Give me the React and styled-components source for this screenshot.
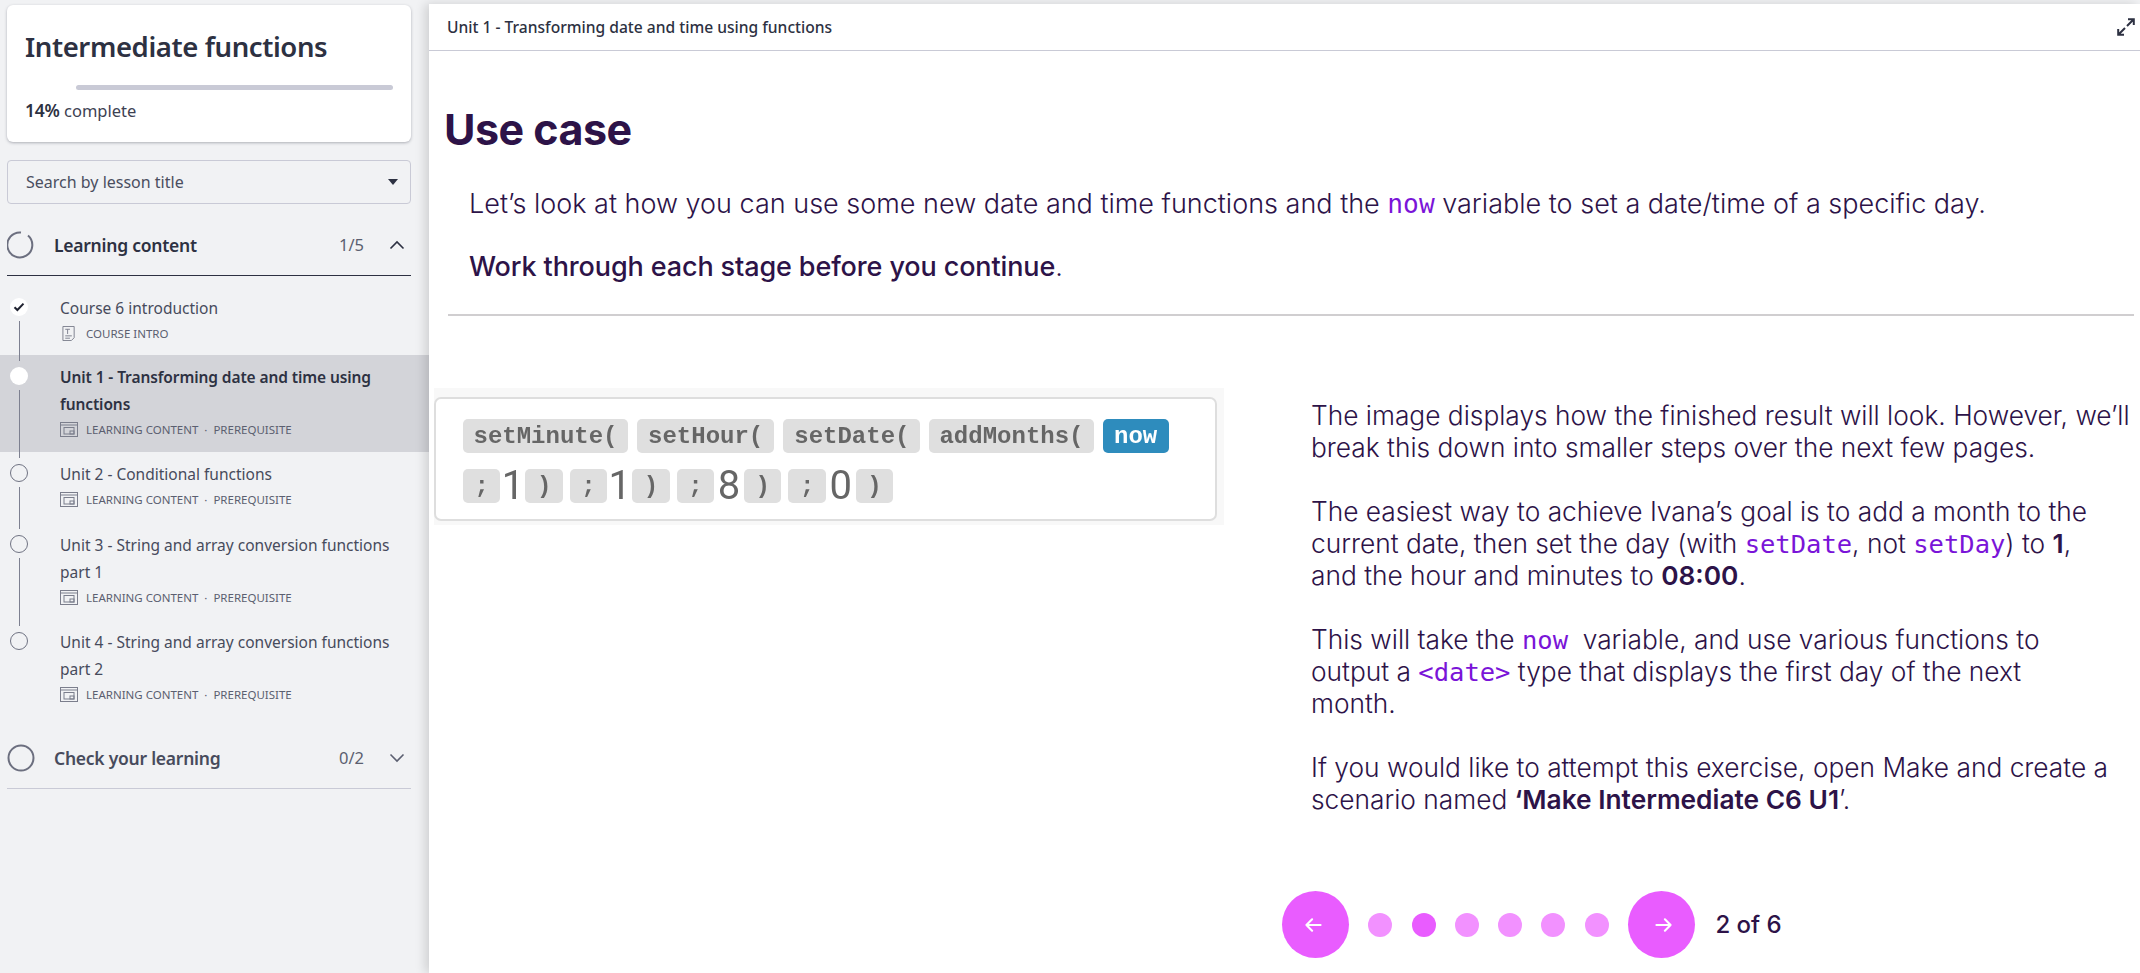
import React from 'react';
import styled, { createGlobalStyle } from 'styled-components';

const Global = createGlobalStyle`
  html, body { margin: 0; padding: 0; height: 100%; overflow: hidden; background: #fff; }
  #root { height: 973px; }
  * { box-sizing: border-box; }
`;
const SIDE = `"Noto Sans", "Open Sans", sans-serif`;
const BODY = `Inter, "Liberation Sans", sans-serif`;
const INK = '#2d3142';
const PURPLE = '#2d1348';

const Page = styled.div`
  display: flex; width: 2140px; height: 973px; overflow: hidden; background: #f1f2f4;
`;
const Sidebar = styled.aside`
  width: 429px; flex: none; padding-top: 5px; font-family: ${SIDE}; color: ${INK};
`;
const Card = styled.div`
  margin: 0 18px 0 7px; height: 137px; background: #fff; border-radius: 6px;
  box-shadow: 0 1px 3px rgba(45,49,66,.35); padding: 20px 18px 0;
`;
const Title = styled.h1`
  margin: 0; font-size: 27.5px; line-height: 43px; font-weight: 600; letter-spacing: -.4px; color: ${INK};
`;
const Track = styled.div`
  margin: 17px 0 0 51px; height: 5px; border-radius: 3px; background: #c9cad6;
`;
const Progress = styled.div`
  margin-top: 8px; font-size: 16.5px; line-height: 24px; color: #3d4152;
  b { font-weight: 600; font-size: 17.5px; letter-spacing: -.2px; color: ${INK}; }
`;
const Search = styled.div`
  margin: 18px 18px 0 7px; height: 44px; border: 1px solid #c9cad6; border-radius: 4px;
  display: flex; align-items: center; justify-content: space-between; padding: 0 12px 0 18px;
  font-size: 16px; color: #4a4e5f;
`;
const Caret = styled.span`
  width: 0; height: 0; border-left: 5px solid transparent; border-right: 5px solid transparent;
  border-top: 6px solid ${INK};
`;
const SectionHead = styled.div`
  margin: 0 18px 0 7px; height: ${p => p.$h}px; padding-top: ${p => p.$pt}px;
  display: flex; align-items: center; border-bottom: 1px solid ${p => p.$line};
`;
const SectionName = styled.span`
  margin-left: 19px; flex: 1; font-size: 17.5px; font-weight: 600; letter-spacing: -.25px; color: ${p => p.$c};
`;
const Count = styled.span`
  font-size: 16.5px; color: #5b5f70; margin-right: 25px;
`;
const Items = styled.ul`
  list-style: none; margin: 10px 0 0; padding: 0;
`;
const Item = styled.li`
  display: flex; height: ${p => p.$h}px; padding-top: 9px;
  background: ${p => (p.$active ? '#d3d4d9' : 'transparent')};
`;
const Rail = styled.div`
  width: 38px; margin-right: 22px; flex: none; display: flex; flex-direction: column; align-items: center;
`;
const Node = styled.div`
  width: 18px; height: 18px; flex: none; margin-top: 3px; border-radius: 50%;
  display: flex; align-items: center; justify-content: center;
  background: ${p => (p.$open ? 'transparent' : '#fff')};
  border: ${p => (p.$open ? '1px solid #6f7282' : 'none')};
`;
const Line = styled.div`
  width: 1px; flex: 1; margin: 5px 0 ${p => p.$mb}px; background: #7d8090;
`;
const ItemBody = styled.div`
  min-width: 0; flex: 1; padding-right: 30px;
`;
const ItemTitle = styled.div`
  font-size: 15.5px; line-height: 27px; font-weight: ${p => (p.$active ? 600 : 400)};
  letter-spacing: ${p => (p.$active ? '-.1px' : '0')};
  color: ${p => (p.$active ? INK : '#474b5c')};
`;
const Meta = styled.div`
  display: flex; align-items: center; height: 22px; font-size: 11.5px; color: #5b5f70; gap: 8px;
`;
const Main = styled.main`
  flex: 1; min-width: 0; margin-top: 4px; background: #fff; box-shadow: -4px 0 10px rgba(0,0,0,.14);
  position: relative; font-family: ${BODY}; color: ${PURPLE};
`;
const Header = styled.header`
  height: 47px; padding: 0 4px 0 18px; display: flex; align-items: center; justify-content: space-between;
  border-bottom: 1px solid #c9cad6; font-family: ${SIDE}; font-size: 15.6px; font-weight: 500; color: ${INK};
`;
const H2 = styled.h2`
  margin: 0; padding: 48px 0 0 15px; font-size: 43px; line-height: 60px; font-weight: 700; letter-spacing: -.5px;
`;
const Intro = styled.p`
  margin: 0; padding: ${p => p.$pt}px 0 0 40px; font-size: 27px; line-height: 32px; font-weight: ${p => p.$w || 300};
  letter-spacing: ${p => (p.$w ? '-.12px' : '0')}; white-space: nowrap;
`;
const Thin = styled.span`
  font-weight: 300;
`;
const Code = styled.code`
  font-family: "DejaVu Sans Mono", monospace; font-size: .97em; color: #7a14d8; font-weight: 400;
`;
const Divider = styled.hr`
  margin: 31px 6px 0 19px; border: 0; height: 2px; background: #d0ced0;
`;
const Columns = styled.div`
  display: grid; grid-template-columns: 882px 1fr; margin-top: 72px;
`;
const Shot = styled.div`
  margin-left: 5px; width: 790px; height: 137px; background: #f8f8f8; padding: 9px 8px 4px 0;
`;
const ShotCard = styled.div`
  width: 783px; height: 124px; background: #fff; border: 2px solid #dedede; border-radius: 7px;
  padding: 20px 0 0 27px; display: flex; flex-direction: column; gap: 16px; filter: blur(.45px);
`;
const ChipRow = styled.div`
  display: flex; align-items: center; gap: ${p => p.$gap}px;
`;
const Chip = styled.span`
  height: 34px; border-radius: 5px; background: ${p => (p.$blue ? '#2e8cbd' : '#dfdfdf')};
  color: ${p => (p.$blue ? '#fff' : '#666')}; padding: 0 ${p => p.$pad}px; display: flex; align-items: center;
  font-family: "Liberation Mono", monospace; font-size: 24px; font-weight: 700;
`;
const Group = styled.span`
  display: flex; align-items: center;
`;
const Num = styled.span`
  width: ${p => p.$w}px; text-align: center; font-family: Roboto, sans-serif; font-size: 40px; font-weight: 400;
  color: #666; line-height: 34px;
`;
const Right = styled.div`
  margin-top: 12px;
`;
const Para = styled.p`
  margin: 0 0 32px; font-size: 26.3px; line-height: 32px; font-weight: 300; white-space: nowrap;
  strong { font-weight: 600; }
`;
const Pager = styled.nav`
  position: absolute; left: 853px; top: 887px; display: flex; align-items: center; gap: 19.3px;
`;
const Round = styled.button`
  width: 67px; height: 67px; border: 0; border-radius: 50%; background: #e95cff; padding: 0;
  display: flex; align-items: center; justify-content: center;
`;
const Dot = styled.span`
  width: 24px; height: 24px; border-radius: 50%; background: ${p => (p.$on ? '#e95cff' : '#f291ff')};
`;
const PageNo = styled.span`
  margin-left: 1px; font-size: 24px; font-weight: 500; color: ${PURPLE};
`;

const Check = () => (
  <svg width="12" height="10" viewBox="0 0 12 10"><path d="M1.5 5.2 4.4 8 10.5 1.6" fill="none" stroke="#1f2230" strokeWidth="2" /></svg>
);
const MonitorIcon = () => (
  <svg width="18" height="15" viewBox="0 0 18 15" fill="none" stroke="#7b7e8c" strokeWidth="1"><rect x=".5" y=".5" width="17" height="14" /><path d="M.5 3h17" /><rect x="4" y="5.5" width="10" height="6.5" /><rect x="10" y="9" width="4" height="3" /></svg>
);
const DocIcon = () => (
  <svg width="18" height="15" viewBox="0 0 18 16" fill="none" stroke="#7b7e8c" strokeWidth="1"><path d="M2.5.5h12v12l-3 3h-9z" /><path d="M5 3.5h5M7.5 3.5v5M5 10.5h7M5 13h5" /></svg>
);
const Chevron = ({ up, c = INK }) => (
  <svg width="16" height="10" viewBox="0 0 16 10" fill="none" stroke={c} strokeWidth="1.6" style={{ marginRight: 6 }}><path d={up ? 'M1.5 8.5 8 2l6.5 6.5' : 'M1.5 1.5 8 8l6.5-6.5'} /></svg>
);
const Ring = ({ part }) => (
  <svg width="28" height="28" viewBox="0 0 28 28" fill="none" stroke="#6c6f7f" strokeWidth="2">
    {part ? <path d="M21 4.5A12.5 12.5 0 1 1 14 1.5" /> : <circle cx="14" cy="14" r="12.5" />}
  </svg>
);
const Arrow = ({ left }) => (
  <svg width="17" height="16" viewBox="0 0 18 16" fill="none" stroke="#fff" strokeWidth="2.2" strokeLinecap="round" strokeLinejoin="round" style={left ? { marginLeft: -4 } : { marginRight: -4 }}>
    {left ? <path d="M16.5 8H1.5M7.5 2 1.5 8l6 6" /> : <path d="M1.5 8h15M10.5 2l6 6-6 6" />}
  </svg>
);
const Expand = () => (
  <svg width="20" height="20" viewBox="0 0 20 20" fill="none" stroke="#2d3142" strokeWidth="2"><path d="M12 2.2h5.8V8M17.5 2.5 11 9M2.2 12v5.8H8M2.5 17.5 9 11" /></svg>
);

const META = 'LEARNING CONTENT \u00a0·\u00a0 PREREQUISITE';
const units = [
  { title: 'Unit 1 - Transforming date and time using functions', h: 97, active: true, mb: -6 },
  { title: 'Unit 2 - Conditional functions', h: 71, mb: -6, open: true },
  { title: 'Unit 3 - String and array conversion functions part 1', h: 97, mb: -6, open: true },
  { title: 'Unit 4 - String and array conversion functions part 2', h: 97, open: true, last: true },
];
const groups = [['1', 25], ['1', 25], ['8', 30], ['0', 30]];

export default function App() {
  return (
    <Page>
      <Global />
      <Sidebar>
        <Card>
          <Title>Intermediate functions</Title>
          <Track />
          <Progress><b>14%</b> complete</Progress>
        </Card>
        <Search>Search by lesson title<Caret /></Search>
        <SectionHead $h={72} $pt={10} $line="#2d3142">
          <Ring part />
          <SectionName $c={INK}>Learning content</SectionName>
          <Count>1/5</Count>
          <Chevron up />
        </SectionHead>
        <Items>
          <Item $h={69}>
            <Rail><Node><Check /></Node><Line $mb={-6} /></Rail>
            <ItemBody>
              <ItemTitle>Course 6 introduction</ItemTitle>
              <Meta><DocIcon />COURSE INTRO</Meta>
            </ItemBody>
          </Item>
          {units.map(u => (
            <Item key={u.title} $h={u.h} $active={u.active}>
              <Rail>
                <Node $open={u.open} />
                {!u.last && <Line $mb={u.mb} />}
              </Rail>
              <ItemBody>
                <ItemTitle $active={u.active}>{u.title}</ItemTitle>
                <Meta><MonitorIcon />{META}</Meta>
              </ItemBody>
            </Item>
          ))}
        </Items>
        <SectionHead $h={72} $pt={10} $line="#c9cad6">
          <Ring />
          <SectionName $c="#474b5c">Check your learning</SectionName>
          <Count>0/2</Count>
          <Chevron c="#5b5f70" />
        </SectionHead>
      </Sidebar>
      <Main>
        <Header>Unit 1 - Transforming date and time using functions<Expand /></Header>
        <H2>Use case</H2>
        <Intro $pt={29}>Let’s look at how you can use some new date and time functions and the <Code>now</Code> variable to set a date/time of a specific day.</Intro>
        <Intro $pt={31} $w={500}>Work through each stage before you continue<Thin>.</Thin></Intro>
        <Divider />
        <Columns>
          <Shot>
            <ShotCard>
              <ChipRow $gap={9}>
                <Chip $pad={10.5}>setMinute(</Chip>
                <Chip $pad={11}>setHour(</Chip>
                <Chip $pad={11}>setDate(</Chip>
                <Chip $pad={10}>addMonths(</Chip>
                <Chip $pad={11.5} $blue>now</Chip>
              </ChipRow>
              <ChipRow $gap={7}>
                {groups.map(([n, w], i) => (
                  <Group key={i}>
                    <Chip $pad={11.5}>;</Chip><Num $w={w}>{n}</Num><Chip $pad={11.5}>)</Chip>
                  </Group>
                ))}
              </ChipRow>
            </ShotCard>
          </Shot>
          <Right>
            <Para>The image displays how the finished result will look. However, we’ll<br />break this down into smaller steps over the next few pages.</Para>
            <Para>The easiest way to achieve Ivana’s goal is to add a month to the<br />current date, then set the day (with <Code>setDate</Code>, not <Code>setDay</Code>) to <strong>1</strong>,<br />and the hour and minutes to <strong>08:00</strong>.</Para>
            <Para>This will take the <Code>now</Code>&nbsp; variable, and use various functions to<br />output a <Code>&lt;date&gt;</Code> type that displays the first day of the next<br />month.</Para>
            <Para>If you would like to attempt this exercise, open Make and create a<br />scenario named <strong>‘Make Intermediate C6 U1</strong>’.</Para>
          </Right>
        </Columns>
        <Pager>
          <Round aria-label="Previous"><Arrow left /></Round>
          {[0, 1, 2, 3, 4, 5].map(i => <Dot key={i} $on={i === 1} />)}
          <Round aria-label="Next"><Arrow /></Round>
          <PageNo>2 of 6</PageNo>
        </Pager>
      </Main>
    </Page>
  );
}
